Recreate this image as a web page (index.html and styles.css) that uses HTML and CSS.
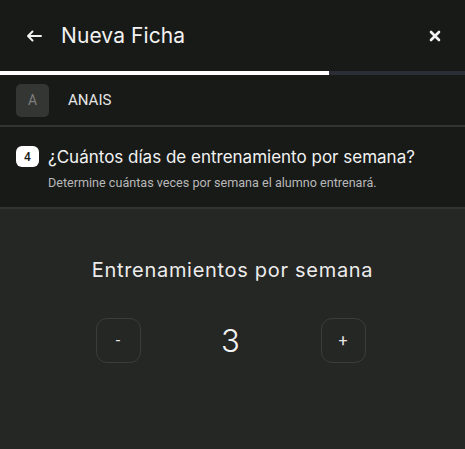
FILE: index.html
```html
<!DOCTYPE html>
<html lang="es">
     <head>
          <meta charset="UTF-8" />
          <meta name="viewport" content="width=device-width, initial-scale=1.0" />
          <title>Nueva Ficha</title>
          <link rel="stylesheet" href="styles.css">
     </head>
     <body>
          <header class="top-bar">
               <button class="icon-btn back">
                    <svg width="16" height="12" viewBox="0 0 16 12" fill="none" stroke="#f2f2f2" stroke-width="2" stroke-linecap="round" stroke-linejoin="round">
                         <path d="M15 6H2M6.5 1.5L2 6l4.5 4.5" />
                    </svg>
               </button>
               <h1 class="title">Nueva Ficha</h1>
               <button class="icon-btn close">
                    <svg width="12" height="12" viewBox="0 0 12 12" fill="none" stroke="#f2f2f2" stroke-width="2.6" stroke-linecap="round">
                         <path d="M2 2l8 8M10 2l-8 8" />
                    </svg>
               </button>
          </header>

          <div class="progress">
               <div class="progress-fill" style="width: 329px"></div>
          </div>

          <div class="student">
               <div class="avatar">A</div>
               <span class="student-name">ANAIS</span>
          </div>

          <section class="question">
               <div class="question-head">
                    <span class="step">4</span>
                    <h2>¿Cuántos días de entrenamiento por semana?</h2>
               </div>
               <p class="hint">Determine cuántas veces por semana el alumno entrenará.</p>
          </section>

          <main class="counter-area">
               <h3 class="counter-label">Entrenamientos por semana</h3>
               <div class="counter">
                    <button class="step-btn">-</button>
                    <span class="count">3</span>
                    <button class="step-btn">+</button>
               </div>
          </main>
     </body>
</html>
```

FILE: styles.css
```css
* {
     padding: 0;
     margin: 0;
     box-sizing: border-box;
}
html,
body {
     height: 100%;
}
body {
     background-color: #252725;
     color: #f2f2f2;
     font-family: Inter, "Noto Sans", sans-serif;
     display: flex;
     flex-direction: column;
}
button {
     background: none;
     border: none;
     color: inherit;
     font-family: inherit;
     cursor: pointer;
}

/* top bar */
.top-bar {
     height: 71px;
     background-color: #181a18;
     display: flex;
     align-items: center;
     padding: 0 20px 0 26px;
}
.icon-btn {
     display: flex;
     align-items: center;
}
.back {
     margin-right: 19px;
}
.title {
     font-size: 21px;
     font-weight: 400;
     letter-spacing: 0.1px;
     flex: 1;
}
.close {
     padding: 4px;
}

.progress {
     height: 4px;
     background-color: #2b2d37;
}
.progress-fill {
     height: 100%;
     background-color: #ffffff;
}

/* student row */
.student {
     height: 52px;
     background-color: #181a18;
     border-bottom: 2px solid #323432;
     display: flex;
     align-items: center;
     padding: 0 16px;
     gap: 19px;
}
.avatar {
     width: 33px;
     height: 33px;
     border-radius: 5px;
     background-color: #343634;
     color: #7c7e7c;
     display: flex;
     align-items: center;
     justify-content: center;
     font-family: Roboto, sans-serif;
     font-size: 14px;
}
.student-name {
     font-family: Roboto, sans-serif;
     font-size: 15px;
     font-weight: 400;
     color: #e6e6e6;
}

/* question */
.question {
     height: 82px;
     background-color: #181a18;
     border-bottom: 2px solid #323432;
     padding: 19px 16px 0;
}
.question-head {
     display: flex;
     align-items: center;
     gap: 9px;
}
.step {
     width: 23px;
     height: 21px;
     border-radius: 6px;
     background-color: #ffffff;
     color: #181a18;
     font-family: Roboto, sans-serif;
     font-size: 12px;
     font-weight: 500;
     display: flex;
     align-items: center;
     justify-content: center;
}
.question h2 {
     font-size: 17px;
     font-weight: 400;
}
.hint {
     font-family: Roboto, sans-serif;
     font-size: 12.6px;
     color: #b8b8b8;
     margin: 8px 0 0 32px;
}

/* counter */
.counter-area {
     flex: 1;
     display: flex;
     flex-direction: column;
     align-items: center;
     padding-top: 49px;
}
.counter-label {
     font-size: 20px;
     font-weight: 400;
     letter-spacing: 0.7px;
     color: #ececec;
}
.counter {
     display: flex;
     align-items: center;
     gap: 70px;
     margin-top: 36px;
     margin-right: 4px;
}
.step-btn {
     width: 45px;
     height: 45px;
     border: 1.5px solid #3a3d3a;
     border-radius: 11px;
     font-size: 16px;
     font-family: Roboto, sans-serif;
     color: #e6e6e6;
}
.count {
     font-size: 31px;
     font-weight: 300;
     width: 40px;
     text-align: center;
}
```
